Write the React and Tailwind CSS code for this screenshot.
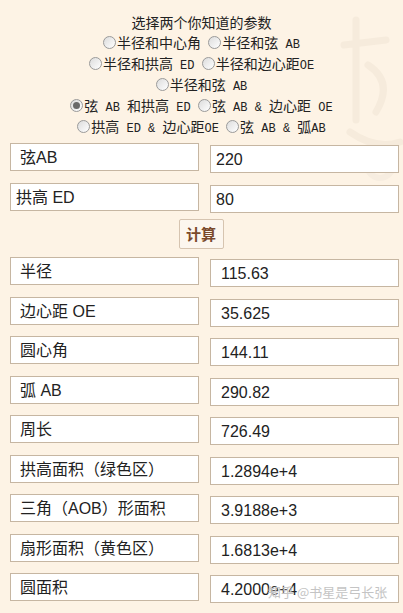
import React from 'react';

// split a label into CJK runs and latin runs; latin is set smaller in mono
const Mix = ({ text }) => {
  const parts = text.split(/([\u3000-\u9fff\uff00-\uffef]+)/).filter(Boolean);
  return parts.map((p, i) =>
    /[\u3000-\u9fff\uff00-\uffef]/.test(p) ? (
      <span key={i}>{p}</span>
    ) : (
      <span key={i} className="font-['Liberation_Mono',monospace] text-[12px] whitespace-pre">{p}</span>
    )
  );
};

const Radio = ({ checked }) => (
  <span className="inline-flex items-center justify-center w-[13px] h-[13px] rounded-full border border-[#9a9a9a] bg-gradient-to-br from-[#dcdcdc] to-white mr-[1px] shrink-0">
    {checked && <span className="w-[7px] h-[7px] rounded-full bg-[#6a6a6a]" />}
  </span>
);

const Option = ({ label, checked }) => (
  <span className="inline-flex items-center leading-none">
    <Radio checked={checked} />
    <span className="leading-none">
      <Mix text={label} />
    </span>
  </span>
);

const lines = [
  [['半径和中心角 '], ['半径和弦 AB']],
  [['半径和拱高 ED '], ['半径和边心距OE']],
  [['半径和弦 AB']],
  [['弦 AB 和拱高 ED ', true], ['弦 AB & 边心距 OE']],
  [['拱高 ED & 边心距OE '], ['弦 AB & 弧AB']],
];

const results = [
  ['半径', '115.63'],
  ['边心距 OE', '35.625'],
  ['圆心角', '144.11'],
  ['弧 AB', '290.82'],
  ['周长', '726.49'],
  ['拱高面积（绿色区）', '1.2894e+4'],
  ['三角（AOB）形面积', '3.9188e+3'],
  ['扇形面积（黄色区）', '1.6813e+4'],
  ['圆面积', '4.2000e+4'],
];

const Row = ({ label, value, labelPad = 'pl-[9px]', valuePad = 'pl-[10px]' }) => (
  <div className="flex items-start gap-[11px]">
    <div className={`w-[189px] h-[28px] pt-[2px] flex items-center leading-none bg-white border border-[#c6b6a2] ${labelPad}`}>{label}</div>
    <div className={`w-[189px] h-[28px] pt-[2px] mt-[2px] flex items-center leading-none bg-white border border-[#c6b6a2] ${valuePad}`}>{value}</div>
  </div>
);

export default function App() {
  return (
    <div className="relative w-[403px] h-[613px] overflow-hidden bg-[#fdf3e5] text-[#222]">
      {/* faint decoration, top right */}
      <svg className="absolute right-0 top-0" width="75" height="190" viewBox="0 0 75 190" fill="none">
        <path d="M28 20 L28 120 M16 45 L58 40 M40 65 Q66 82 48 112 M22 132 Q48 150 72 142" stroke="#f6ebdc" strokeWidth="7" strokeLinecap="round" />
        <circle cx="52" cy="165" r="13" stroke="#f7ede0" strokeWidth="6" />
      </svg>

      <div className="relative pt-[11px] text-[14px] font-['Noto_Sans_CJK_SC',sans-serif]">
        <div className="h-[21px] flex items-center justify-center leading-none">选择两个你知道的参数</div>
        {lines.map((line, i) => (
          <div key={i} className="h-[21px] flex items-center justify-center whitespace-pre">
            {line.map(([label, checked], j) => (
              <Option key={j} label={label} checked={checked} />
            ))}
          </div>
        ))}
      </div>

      <div className="relative mt-[6px] pl-[10px] text-[16px] font-['Liberation_Sans','Noto_Sans_CJK_SC',sans-serif]">
        <div className="flex flex-col gap-[10px]">
          <Row label="弦AB" value="220" labelPad="pl-[9px]" valuePad="pl-[5px]" />
          <Row label="拱高 ED" value="80" labelPad="pl-[5px]" valuePad="pl-[5px]" />
        </div>
        <div className="flex justify-center pr-[11px] mt-[6px]">
          <button className="w-[45px] h-[30px] bg-[#fcf6ee] border border-[#d6c4b0] rounded-[2px] text-[15px] font-bold text-[#7a4a2c] font-['Noto_Sans_CJK_SC',sans-serif]">
            计算
          </button>
        </div>
        <div className="flex flex-col gap-[9.5px] mt-[8px]">
          {results.map(([l, v]) => (
            <Row key={l} label={l} value={v} />
          ))}
        </div>
      </div>

      <div className="absolute left-[268px] top-[582px] whitespace-nowrap text-[13px] leading-[20px] text-[#c4c4c4] font-['Noto_Sans_CJK_SC',sans-serif] [text-shadow:0_0_2px_#ffffff]">
        知乎 @书星是弓长张
      </div>
    </div>
  );
}
